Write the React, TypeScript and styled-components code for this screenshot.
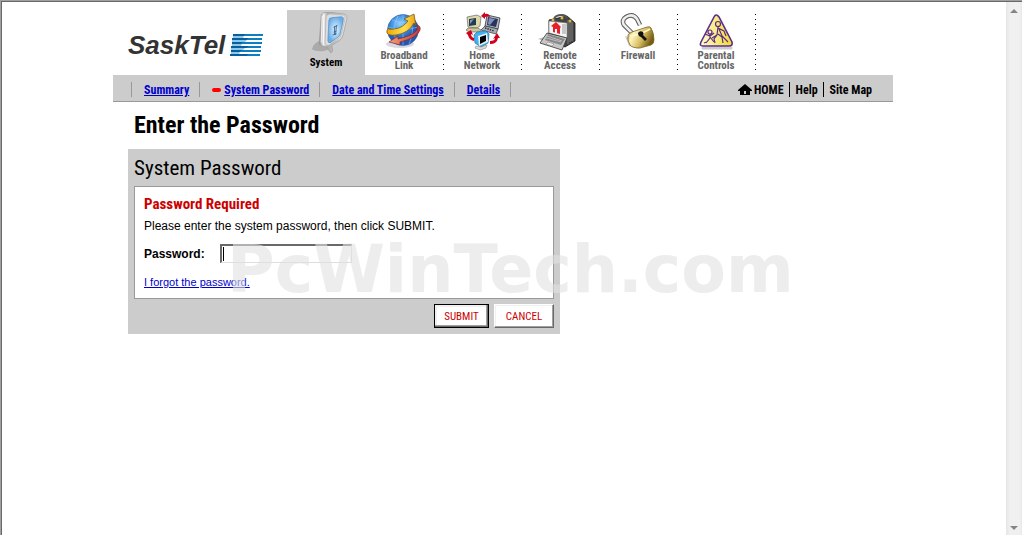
import React from "react";
import styled, { createGlobalStyle } from "styled-components";

const NARROW = '"Roboto Condensed", "Arial Narrow", "Liberation Sans", Arial, sans-serif';
const SANS = '"Liberation Sans", Arial, sans-serif';

const GlobalStyle = createGlobalStyle`
  *, *::before, *::after { box-sizing: border-box; }
  body { margin: 0; background: #fff; color: #000; font-family: ${SANS}; font-size: 12px; }
`;

const Frame = styled.div`
  display: flex;
  min-height: 100vh;
  border-top: 1px solid #a0a0a0;
  border-left: 1px solid #a0a0a0;
`;

const Viewport = styled.div`
  flex: 1;
  display: flex;
  border-top: 1px solid #696969;
  border-left: 1px solid #696969;
`;

const Main = styled.div`
  flex: 1;
  padding: 8px 2px 0 0;
`;

const Page = styled.div`
  max-width: 780px;
  margin: 0 auto;
`;

const ScrollTrack = styled.div`
  display: flex;
  flex-direction: column;
  justify-content: space-between;
  align-items: center;
  width: 16px;
  padding: 7px 0 5px;
  background: linear-gradient(to right, #e6e6e6, #f0f0f0 25%, #f0f0f0 85%, #e8e8e8);
`;

const Header = styled.header`
  display: flex;
  height: 65px;
`;

const Brand = styled.a`
  display: flex;
  align-items: center;
  gap: 5px;
  width: 174px;
  padding: 4px 0 0 15px;
  color: #333;
  text-decoration: none;
`;

const BrandName = styled.span`
  font: italic bold 26px/30px ${SANS};
`;

const Tabs = styled.nav`
  display: flex;
`;

const Tab = styled.a<{ $active?: boolean }>`
  display: flex;
  flex-direction: column;
  align-items: center;
  width: 78px;
  padding-top: 2px;
  background: ${(p) => (p.$active ? "#ccc" : "transparent")};
  color: ${(p) => (p.$active ? "#000" : "#666")};
  font: bold 11px/10px ${NARROW};
  text-align: center;
  text-decoration: none;
`;

const TabLabel = styled.span<{ $low?: boolean }>`
  padding: ${(p) => (p.$low ? "5px" : "0")} 14px 0;
`;

const Dots = styled.span`
  width: 1px;
  height: 56px;
  margin: 4px -1px 0 0;
  background: repeating-linear-gradient(to bottom, #000 0 1px, transparent 1px 5px);
`;

const SubNav = styled.nav`
  display: flex;
  justify-content: space-between;
  align-items: center;
  height: 27px;
  padding: 3px 21px 0 18px;
  background: #ccc;
  border-bottom: 1px solid #999;
  font: bold 12px/14px ${NARROW};
`;

const LinkList = styled.div`
  display: flex;
  border-left: 1px solid #999;
`;

const SubItem = styled.span`
  display: flex;
  align-items: center;
  gap: 3px;
  padding: 1px 10px 0 12px;
  border-right: 1px solid #999;
`;

const SubLink = styled.a`
  color: #00c;
`;

const Marker = styled.span`
  width: 9px;
  height: 4px;
  border-radius: 2px;
  background: #f00;
`;

const Utility = styled.div`
  display: flex;
`;

const UtilityLink = styled.a`
  display: flex;
  align-items: center;
  gap: 2px;
  padding: 1px 5px 0 6px;
  color: #000;
  text-decoration: none;
  & + & { border-left: 1px solid #000; }
  &:last-child { padding-right: 0; }
`;

const Content = styled.main`
  padding-left: 15px;
`;

const Title = styled.h1`
  margin: 0;
  padding: 9px 6px 10px;
  font: bold 24px/28px ${NARROW};
`;

const Panel = styled.form`
  position: relative;
  max-width: 432px;
  padding: 6px;
  background: #ccc;
`;

const PanelTitle = styled.h2`
  margin: 0 0 5px;
  font: 21px/26px ${NARROW};
`;

const Box = styled.div`
  height: 113px;
  padding: 8px 9px;
  border: 1px solid #999;
  background: #fff;
`;

const BoxTitle = styled.h3`
  margin: 0;
  color: #c00;
  font: bold 15px/18px ${NARROW};
`;

const Message = styled.p`
  margin: 5px 0 10px;
  line-height: 16px;
`;

const Field = styled.div`
  display: flex;
  align-items: center;
  gap: 15px;
  height: 19px;
`;

const FieldLabel = styled.label`
  font-weight: bold;
`;

const PasswordInput = styled.input`
  width: 132px;
  height: 19px;
  padding: 1px 2px;
  border: 1px solid;
  border-width: 2px 1px 1px 2px;
  border-color: #696969 #ddd #ddd #696969;
  background: linear-gradient(#000, #000) 1px 1px / 1px 14px no-repeat #fff;
  font: 12px/14px ${SANS};
`;

const ForgotLink = styled.a`
  display: inline-block;
  margin-top: 12px;
  color: #00c;
  font-size: 11px;
  line-height: 14px;
`;

const Actions = styled.div`
  display: flex;
  justify-content: flex-end;
  gap: 5px;
  padding-top: 5px;
`;

const Button = styled.button<{ $primary?: boolean }>`
  width: ${(p) => (p.$primary ? "55px" : "60px")};
  height: 24px;
  padding: 1px 0 0;
  border: ${(p) => (p.$primary ? "1px solid #000" : "1px solid")};
  ${(p) => !p.$primary && "border-color: #fff #696969 #696969 #fff;"}
  box-shadow: ${(p) =>
    p.$primary
      ? "inset -1px -1px #696969, inset -2px -2px #a0a0a0, inset 2px 2px #f0f0f0"
      : "inset -1px -1px #a0a0a0, inset 1px 1px #f0f0f0"};
  background: #fff;
  color: #c00;
  font: 11px/14px ${NARROW};
`;

const Watermark = styled.div`
  position: absolute;
  top: 83px;
  left: 99px;
  color: rgba(225, 225, 225, 0.6);
  font: bold 65px/76px "DejaVu Sans", Verdana, sans-serif;
  white-space: nowrap;
  pointer-events: none;
`;

const LogoBars = () => (
  <svg width="34" height="22" viewBox="0 0 34 22" aria-hidden="true">
    <path d="M3 0h30v2H3zM2 4h30v2H2zM2 8h30v2H2zM1 12h30v2H1zM1 16h30v2H1zM0 20h30v2H0z" fill="#0a7fc4" />
    <path d="M3 0h13l-3 2H3zM2 4h17l-3 2H2zM2 8h11l-3 2H2zM1 12h18l-3 2H1zM1 16h11l-3 2H1zM0 20h19l-3 2H0z" fill="#075f9b" />
    <path d="M3 2h11l-1 2H3zM2 6h15l-2 2H2zM2 10h10l-1 2H2zM1 14h14l-2 2H1zM1 18h9l-1 2H1z" fill="#8fc8e8" />
  </svg>
);

const SystemIcon = () => (
  <svg width="46" height="41" viewBox="0 1 46 43" aria-hidden="true">
    <defs>
      <linearGradient id="sysMetal" x1="0" x2="1">
        <stop offset="0" stopColor="#888" /><stop offset=".15" stopColor="#eee" /><stop offset=".3" stopColor="#aaa" /><stop offset="1" stopColor="#eee" />
      </linearGradient>
      <radialGradient id="sysGlass">
        <stop offset="0" stopColor="#e4f5ff" /><stop offset="1" stopColor="#6bade8" />
      </radialGradient>
    </defs>
    <path d="M8 40q2-6 9-9l10 9-6 2q-8 1-13-2z" fill="#aaa" />
    <path d="M18 4q2-3 7-3l16 2q4 0 4 4l-4 18q-1 4-4 6l-8 5 1 6-2 2-4-6-6-2q-2 0-2-3z" fill="url(#sysMetal)" stroke="#999" strokeWidth=".7" />
    <path d="M23 7q0-4 4-4l13 1q4 0 3 4l-4 16q-1 3-3 5l-10 7q-3 1-4-2z" fill="#ddd" stroke="#aaa" strokeWidth=".6" />
    <path d="M26 10q0-3 3-3l10-1q3 0 2 4l-3 13q0 2-2 4l-8 6q-3 1-3-2z" fill="url(#sysGlass)" stroke="#5792c8" strokeWidth=".8" />
    <path d="M19 5l-1 28M21 4l-1 30" stroke="#fff" strokeWidth=".8" />
    <path d="M34 15l-1 10M32 16v9M31 17l4-2M31 22l3-1M30 25l4-1" stroke="#416b93" strokeWidth="1" />
  </svg>
);

const BroadbandIcon = () => (
  <svg width="46" height="39" viewBox="0 0 46 39" aria-hidden="true">
    <defs>
      <radialGradient id="bbGlobe" cx=".4" cy=".3">
        <stop offset="0" stopColor="#8fd0ff" /><stop offset=".6" stopColor="#3b8de0" /><stop offset="1" stopColor="#2558b0" />
      </radialGradient>
      <linearGradient id="bbGold" x1="0" x2="1"><stop offset="0" stopColor="#f0a800" /><stop offset=".6" stopColor="#ffdf50" /><stop offset="1" stopColor="#e8a010" /></linearGradient>
      <linearGradient id="bbRed" x1="0" x2="1"><stop offset="0" stopColor="#f4a070" /><stop offset="1" stopColor="#c03838" /></linearGradient>
    </defs>
    <ellipse cx="19" cy="32" rx="14" ry="4" fill="#d8d8e0" />
    <circle cx="22" cy="18" r="15.500" fill="url(#bbGlobe)" stroke="#2c5ca8" strokeWidth=".6" />
    <path d="M11 8q10 5 22 0M7 15q15 5 30 0M17 4q-7 12-1 28M22 3v30M28 4q7 14 0 28" fill="none" stroke="#a3d4ff" strokeWidth=".5" />
    <path d="M36 13q4 1 3 5-3 8-20 12v3L8 30l9-6v3q14-3 19-9 1-3 0-5z" fill="url(#bbRed)" stroke="#7b2732" strokeWidth=".7" />
    <path d="M8 16q-3 2-2 5 2 3 9 2 13-2 18-12l2 3-2-12-10 5 4 2q-5 7-14 8-6 1-5-1z" fill="url(#bbGold)" stroke="#70500c" strokeWidth=".7" />
  </svg>
);

const NetworkIcon = () => (
  <svg width="46" height="39" viewBox="0 0 46 39" aria-hidden="true">
    <path d="M8 5l10-2 4 2-1 9-3 2-9-1z" fill="#dcd8a8" stroke="#555" strokeWidth=".6" />
    <path d="M10 7l7-1v7l-7 1z" fill="#263a55" /><path d="M11 8l4-1-4 5z" fill="#7c9abc" />
    <path d="M9 16h10l3 2-2 2H10l-3-2z" fill="#cbc79b" stroke="#555" strokeWidth=".6" />
    <path d="M28 3l13 3-2 11-13-3z" fill="#b8bcc8" stroke="#333" strokeWidth=".8" />
    <path d="M29 5l10 2-2 8-9-2z" fill="#28345c" /><path d="M30 6l6 1-5 6-2-1z" fill="#8291ba" />
    <path d="M26 14l13 3-2 5-15-4z" fill="#a9abb8" stroke="#333" strokeWidth=".7" /><path d="M26 16l9 3" stroke="#333" strokeWidth="1.500" strokeDasharray="1.500 1" />
    <path d="M15 23l3-3 9-1 3 3-1 9-7 4-6-4z" fill="#3eb3ef" stroke="#266c9c" strokeWidth=".7" />
    <path d="M19 24l9-3 1 9-9 4z" fill="#e8f4fc" /><path d="M21 25l6-2v6l-6 3z" fill="#000" />
    <path d="M17 34l5 1 6-2-1 3-6 2-5-2z" fill="#ddd" stroke="#777" strokeWidth=".5" />
    <g fill="#d1001f"><path d="M22 4l4-4v2q4-1 5 3-2-1-5 0v2zM7 21l5-3 2 5-2-1q0 3 3 4v3q-5-1-6-6zM38 21l3 5h-2q-1 6-8 6v-3q5 0 5-3l-2 1z" /></g>
  </svg>
);

const RemoteIcon = () => (
  <svg width="46" height="39" viewBox="0 0 46 39" aria-hidden="true">
    <path d="M1 27l12-4v8z" fill="#bbb" />
    <path d="M12 8l18-4 8 7v18l-10 6-16-7z" fill="#444" stroke="#111" strokeWidth=".8" />
    <path d="M31 8v24M33 10v20M35 10v19" stroke="#999" strokeWidth=".7" />
    <path d="M17 7q1-4 8-4 4 0 5 3" fill="none" stroke="#555" strokeWidth="2" />
    <circle cx="16" cy="8" r="1.500" fill="#d9b632" /><circle cx="25" cy="6" r="1.500" fill="#d9b632" /><circle cx="33" cy="9" r="1.500" fill="#d9b632" />
    <path d="M12 9l18 2v15l-18-5z" fill="#f5f5f5" stroke="#777" strokeWidth=".6" />
    <path d="M14 14l5-4 5 5-1 1v6l-7-2v-5z" fill="#e32127" /><path d="M18 17h2v4h-2z" fill="#fff" />
    <path d="M25 13h4M25 15h4M25 17h4M25 19h4M25 21h4" stroke="#777" strokeWidth=".7" />
    <path d="M10 21l20 5-5 12-22-7z" fill="#c7c7c7" stroke="#333" strokeWidth=".8" />
    <path d="M11 22l17 5-4 6-16-5z" fill="#888" /><path d="M10 24l15 5M9 26l15 4" stroke="#ddd" strokeWidth=".6" /><path d="M11 30l6 2-2 2-6-2z" fill="#eee" stroke="#777" strokeWidth=".5" />
  </svg>
);

const FirewallIcon = () => (
  <svg width="46" height="39" viewBox="0 0 46 39" aria-hidden="true">
    <defs><linearGradient id="fwGold" x1="0" x2="1" y2=".4"><stop offset="0" stopColor="#a28628" /><stop offset=".3" stopColor="#fff6c0" /><stop offset=".65" stopColor="#d8be62" /><stop offset="1" stopColor="#765c14" /></linearGradient></defs>
    <path d="M10 24l8 3 6 10-10-3z" fill="#ccc" />
    <path d="M18 22L9 13Q6 8 11 5q7-4 11 2l3 6" fill="none" stroke="#555" strokeWidth="4.500" />
    <path d="M18 22L9 13Q6 8 11 5q7-4 11 2l3 6" fill="none" stroke="#eee" strokeWidth="2.500" />
    <path d="M13 23q1-2 4-3l15-5q3-1 4 1 3 5 3 12 0 4-3 5l-11 3q-8 0-10-3-3-5-2-10z" fill="url(#fwGold)" stroke="#80681e" strokeWidth=".8" />
    <path d="M15 24q10-1 20-7" fill="none" stroke="#fff9d0" strokeWidth="1.500" />
    <path d="M23 21q2-3 5-1 1 2 0 3l4 4-2 2-4-4q-3-1-3-4z" fill="#111" />
  </svg>
);

const ParentalIcon = () => (
  <svg width="46" height="39" viewBox="0 0 46 39" aria-hidden="true">
    <defs><linearGradient id="pcFill" x1="0" x2="1"><stop offset="0" stopColor="#fffbd0" /><stop offset="1" stopColor="#f0dc30" /></linearGradient></defs>
    <path d="M10 36h28" stroke="#ccc" strokeWidth="3" strokeLinecap="round" />
    <path d="M21 5q2-4 5 0l13 25q1 4-3 4H10q-4 0-2-4z" fill="url(#pcFill)" stroke="#5c2a8c" strokeWidth="1.600" />
    <g fill="none" stroke="#5c2a8c" strokeWidth="1.200"><circle cx="25" cy="12" r="2.500" /><path d="M25 15l-1 8-5 3M25 16l6 3 2 5M25 22l4 3 1 6M24 23l-3 4 1 4M26 17l3 7 6 6" /><circle cx="17" cy="20" r="2" /><path d="M17 22v4l-4 5M17 25l4 5M12 22l5 2 4-3M14 30l-3 1" /></g>
  </svg>
);

const HomeIcon = () => (
  <svg width="14" height="12" viewBox="0 0 14 12" aria-hidden="true">
    <path d="M7 0l7 6v1h-2v4H2V7H0V6z" fill="#000" /><path d="M6 7h2v3H6z" fill="#ccc" />
  </svg>
);

const Arrow = ({ down = false }: { down?: boolean }) => (
  <svg width="8" height="4" viewBox="0 0 8 4" aria-hidden="true">
    <path d={down ? "M0 0h8L4 4z" : "M0 4h8L4 0z"} fill="#858585" />
  </svg>
);

const tabs = [
  { label: "System", Icon: SystemIcon },
  { label: "Broadband Link", Icon: BroadbandIcon },
  { label: "Home Network", Icon: NetworkIcon },
  { label: "Remote Access", Icon: RemoteIcon },
  { label: "Firewall", Icon: FirewallIcon },
  { label: "Parental Controls", Icon: ParentalIcon },
];

const subLinks = ["Summary", "System Password", "Date and Time Settings", "Details"];

export default function App() {
  return (
    <>
      <GlobalStyle />
      <Frame>
        <Viewport>
          <Main>
            <Page>
              <Header>
                <Brand href="#">
                  <BrandName>SaskTel</BrandName>
                  <LogoBars />
                </Brand>
                <Tabs>
                  {tabs.map(({ label, Icon }, i) => (
                    <React.Fragment key={label}>
                      <Tab href="#" $active={i === 0}>
                        <Icon />
                        <TabLabel $low={i === 0}>{label}</TabLabel>
                      </Tab>
                      {i > 0 && <Dots />}
                    </React.Fragment>
                  ))}
                </Tabs>
              </Header>
              <SubNav>
                <LinkList>
                  {subLinks.map((label) => (
                    <SubItem key={label}>
                      {label === "System Password" && <Marker />}
                      <SubLink href="#">{label}</SubLink>
                    </SubItem>
                  ))}
                </LinkList>
                <Utility>
                  <UtilityLink href="#"><HomeIcon />HOME</UtilityLink>
                  <UtilityLink href="#">Help</UtilityLink>
                  <UtilityLink href="#">Site Map</UtilityLink>
                </Utility>
              </SubNav>
              <Content>
                <Title>Enter the Password</Title>
                <Panel onSubmit={(e) => e.preventDefault()}>
                  <PanelTitle>System Password</PanelTitle>
                  <Box>
                    <BoxTitle>Password Required</BoxTitle>
                    <Message>Please enter the system password, then click SUBMIT.</Message>
                    <Field>
                      <FieldLabel htmlFor="password">Password:</FieldLabel>
                      <PasswordInput id="password" type="password" />
                    </Field>
                    <ForgotLink href="#">I forgot the password.</ForgotLink>
                  </Box>
                  <Actions>
                    <Button type="submit" $primary>SUBMIT</Button>
                    <Button type="button">CANCEL</Button>
                  </Actions>
                  <Watermark>PcWinTech.com</Watermark>
                </Panel>
              </Content>
            </Page>
          </Main>
          <ScrollTrack>
            <Arrow />
            <Arrow down />
          </ScrollTrack>
        </Viewport>
      </Frame>
    </>
  );
}
